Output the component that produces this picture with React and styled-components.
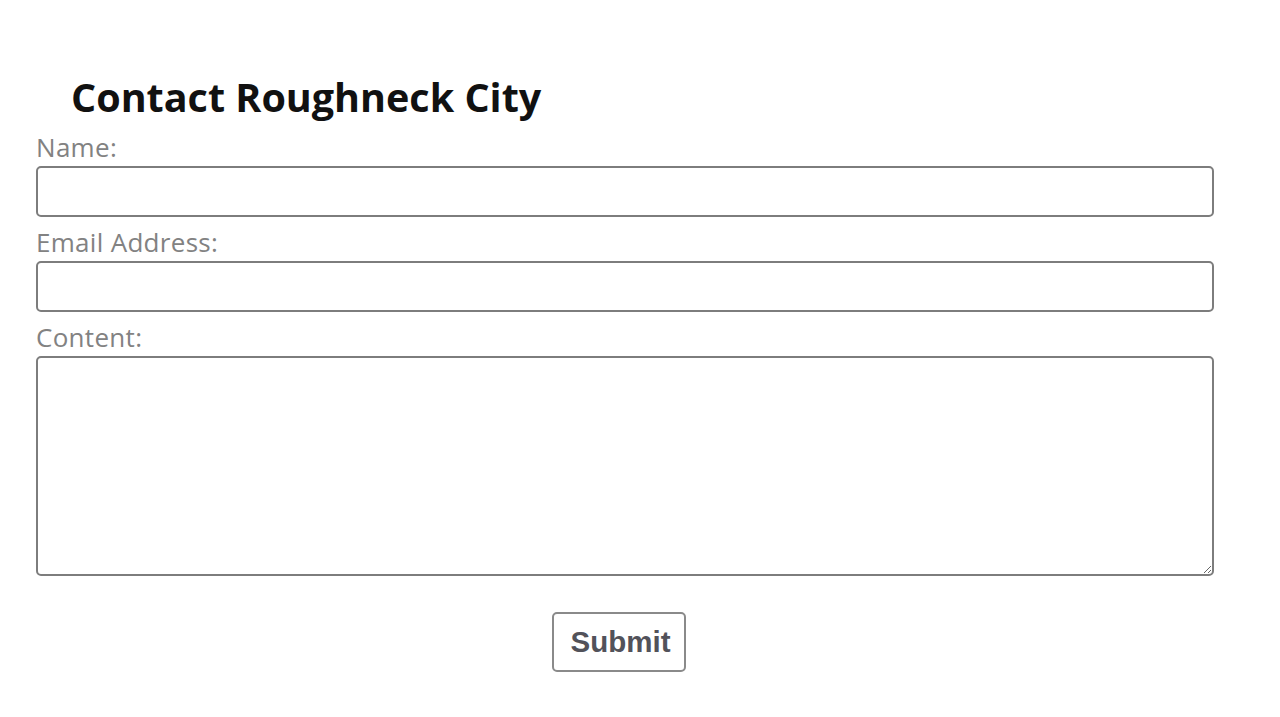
import React from 'react';
import styled, { createGlobalStyle } from 'styled-components';

const GlobalStyle = createGlobalStyle`
  html, body {
    margin: 0;
    padding: 0;
    background: #ffffff;
  }
  body {
    font-family: "Open Sans", "Liberation Sans", sans-serif;
  }
`;

const Page = styled.div`
  padding: 73px 0 0 36px;
  width: 1178px;
`;

const Title = styled.h2`
  margin: 0 0 10px 35px;
  font-size: 39.5px;
  font-weight: 700;
  line-height: 48px;
  color: #111;
`;

const Form = styled.form`
  display: flex;
  flex-direction: column;
`;

const Label = styled.label`
  display: block;
  font-size: 26px;
  line-height: 32px;
  letter-spacing: 0.3px;
  color: #828282;
  margin-top: ${(p) => (p.$first ? '0' : '9px')};
  margin-bottom: 3px;
`;

const TextInput = styled.input`
  box-sizing: border-box;
  width: 100%;
  height: 51px;
  border: 2px solid #7d7d7d;
  border-radius: 5px;
  background: #fff;
  font: inherit;
  outline: none;
`;

const TextArea = styled.textarea`
  box-sizing: border-box;
  width: 100%;
  height: 220px;
  border: 2px solid #7d7d7d;
  border-radius: 5px;
  background: #fff;
  font: inherit;
  outline: none;
  resize: vertical;
`;

const Actions = styled.div`
  display: flex;
  justify-content: center;
  margin-top: 36px;
  padding-right: 12px;
`;

const SubmitButton = styled.button`
  box-sizing: border-box;
  width: 134px;
  height: 60px;
  padding: 0 0 0 3px;
  border: 2px solid #8a8a8a;
  border-radius: 5px;
  background: #fff;
  color: #52525a;
  font-family: "Liberation Sans", Arial, sans-serif;
  font-weight: 700;
  font-size: 29.5px;
  cursor: pointer;
`;

export default function App() {
  return (
    <>
      <GlobalStyle />
      <Page>
        <Title>Contact Roughneck City</Title>
        <Form onSubmit={(e) => e.preventDefault()}>
          <Label $first htmlFor="name">Name:</Label>
          <TextInput id="name" type="text" />
          <Label htmlFor="email">Email Address:</Label>
          <TextInput id="email" type="email" />
          <Label htmlFor="content">Content:</Label>
          <TextArea id="content" />
          <Actions>
            <SubmitButton type="submit">Submit</SubmitButton>
          </Actions>
        </Form>
      </Page>
    </>
  );
}
